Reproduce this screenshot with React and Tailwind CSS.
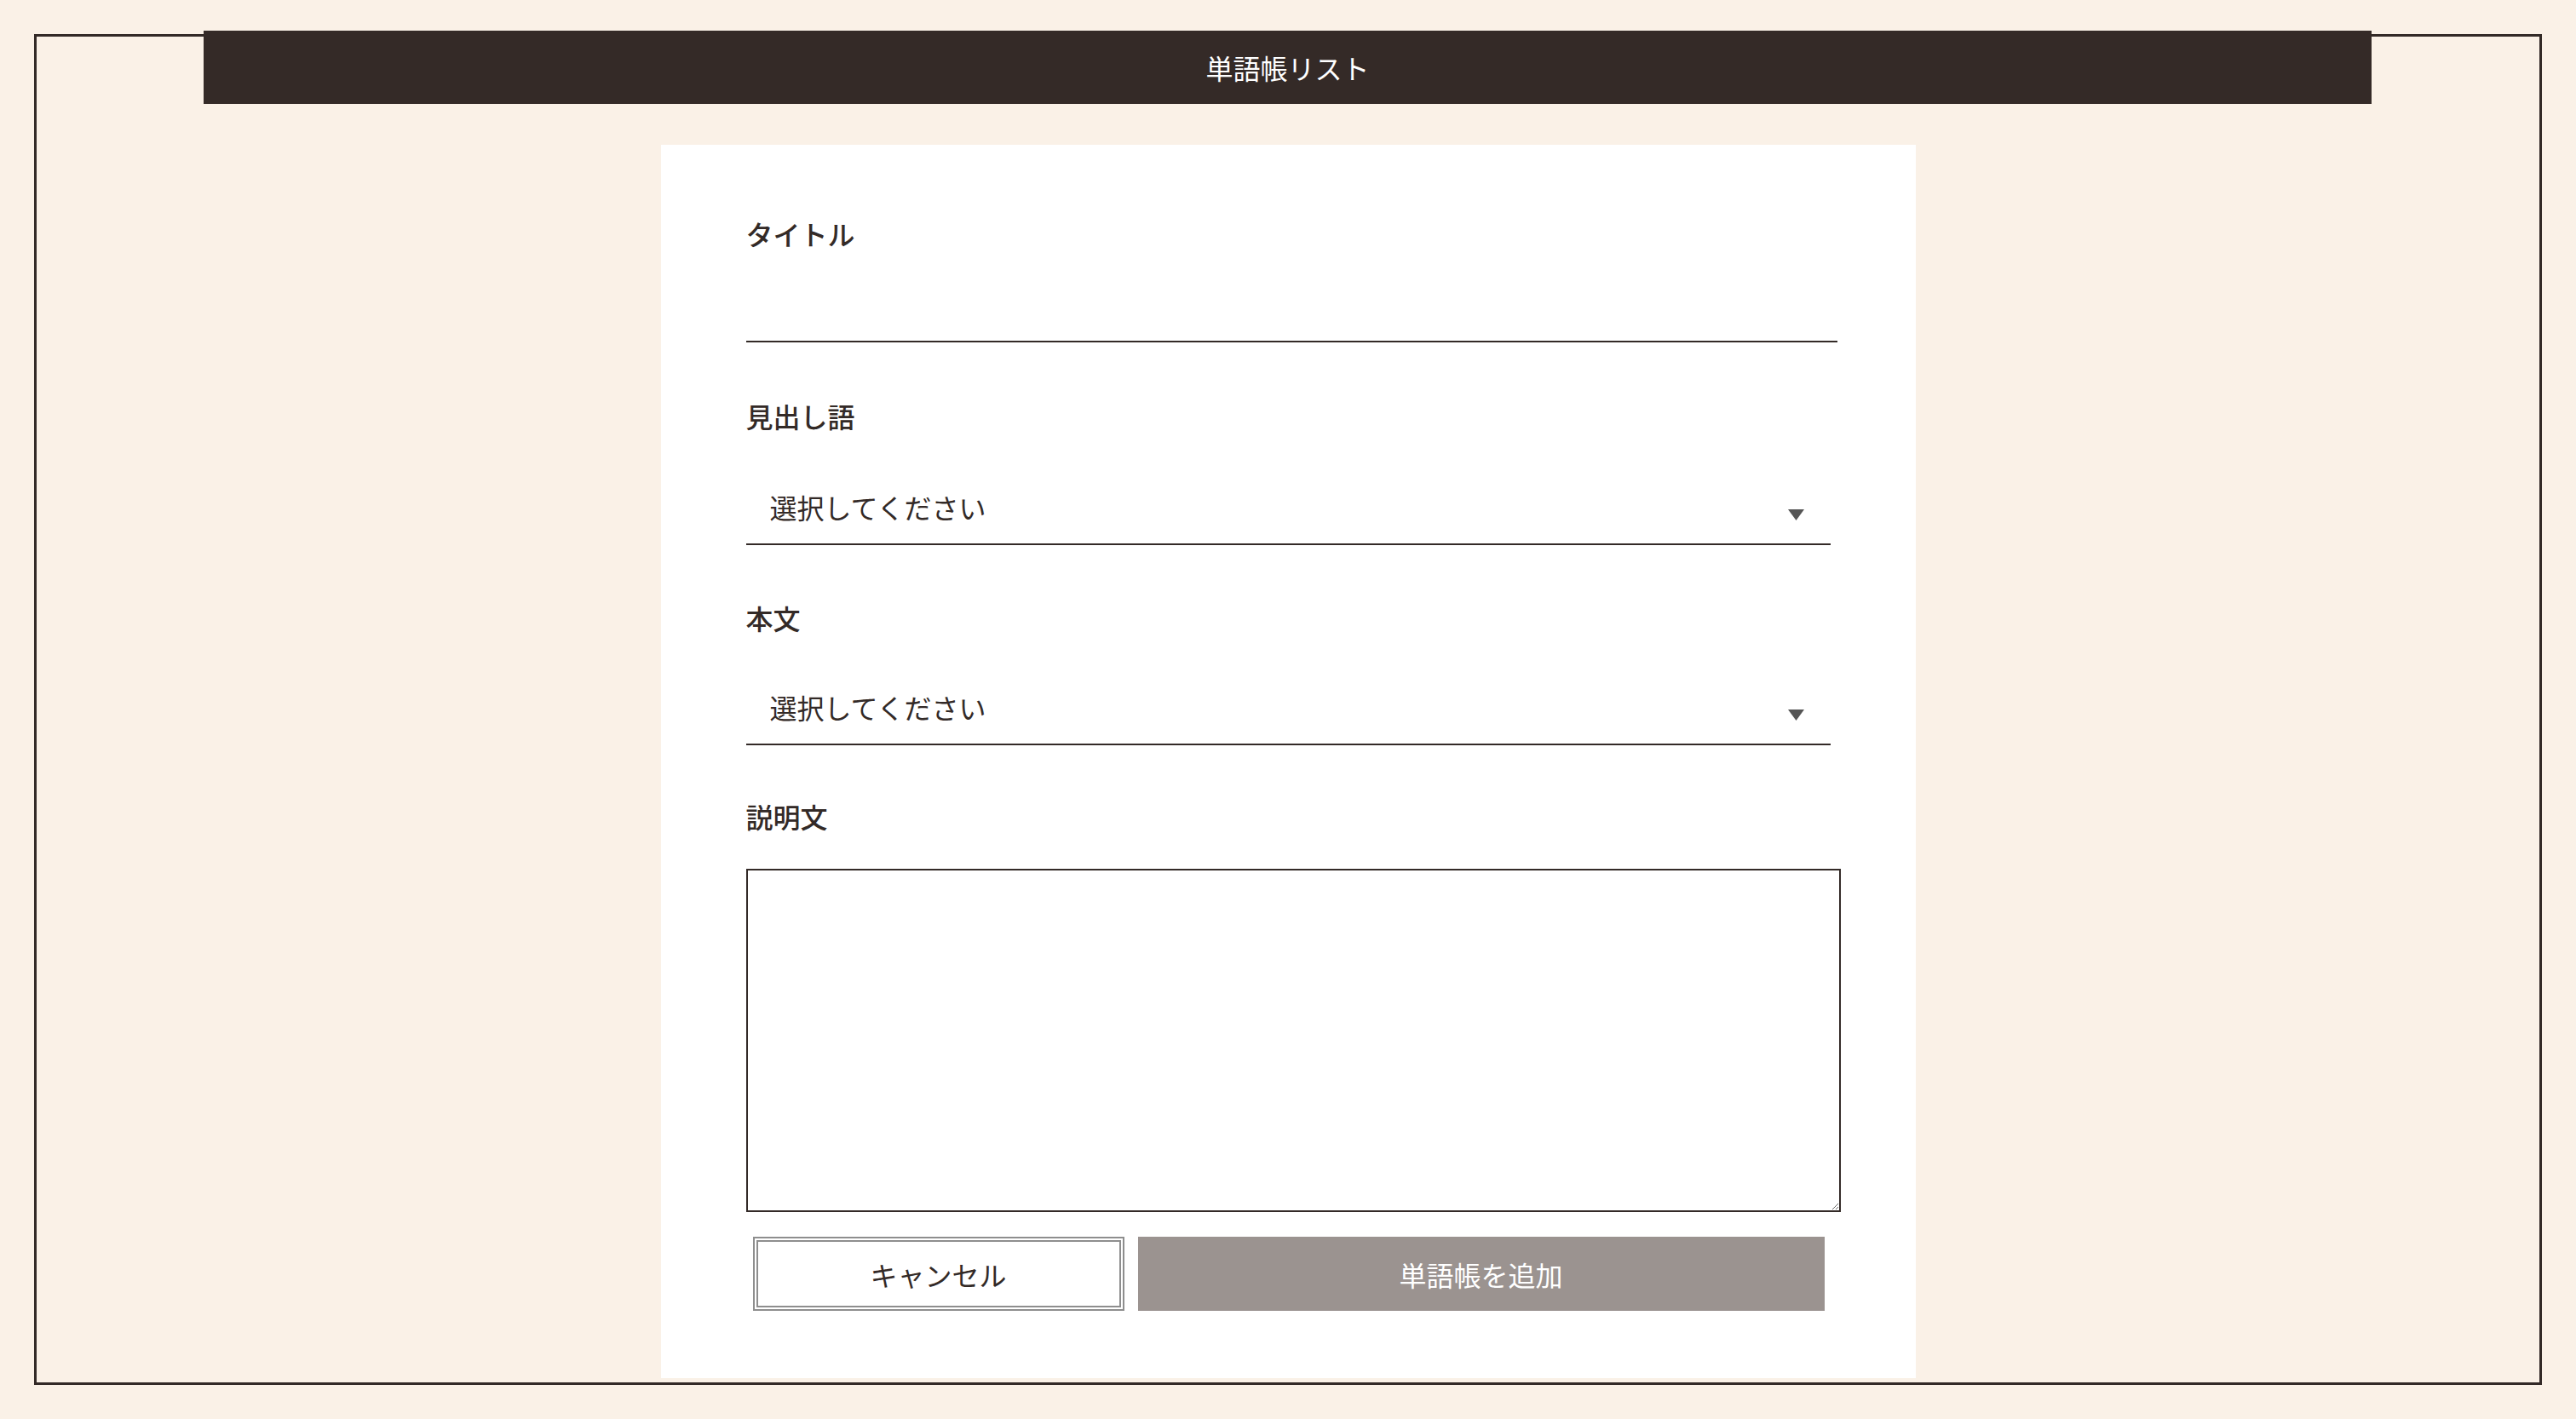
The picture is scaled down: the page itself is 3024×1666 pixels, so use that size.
import { useState } from "react";

const font = { fontFamily: '"Noto Sans CJK JP", "Noto Sans", sans-serif' };

function Label({ children, className = "" }) {
    return (
        <label className={`block h-[48px] text-[32px] leading-[48px] font-medium text-[#332a27] ${className}`}>
            {children}
        </label>
    );
}

function SelectField({ value, onChange, className = "" }) {
    return (
        <div className={`relative w-full ${className}`}>
            <select
                value={value}
                onChange={onChange}
                className="h-[88px] w-full appearance-none rounded-none border-0 border-b-2 border-[#332a27] bg-transparent pl-[28px] text-[32px] text-[#332a27] outline-none"
                style={font}
            >
                <option value="">選択してください</option>
                <option value="a">A</option>
                <option value="b">B</option>
            </select>
            <svg
                className="pointer-events-none absolute right-[31px] top-[46px]"
                width="19"
                height="13"
                viewBox="0 0 19 13"
            >
                <path d="M0 0 H19 L9.5 13 Z" fill="#555" />
            </svg>
        </div>
    );
}

export default function App() {
    const [form, setForm] = useState({ title: "", head: "", body: "", note: "" });

    const set = (key) => (e) => setForm({ ...form, [key]: e.target.value });

    return (
        <div className="relative min-h-screen bg-[#faf1e7] p-[40px]" style={font}>
            {/* header bar sits over the frame */}
            <header className="absolute left-[239px] top-[36px] z-10 flex h-[86px] w-[2545px] items-center justify-center bg-[#342a27]">
                <h1 className="text-[32px] leading-none text-white">単語帳リスト</h1>
            </header>

            <div className="h-[1586px] border-[3px] border-[#332a27] pt-[127px]">
                <section className="mx-auto w-[1473px] bg-white px-[100px] pt-[80px] pb-[79px]">
                    <form onSubmit={(e) => e.preventDefault()}>
                        <Label>タイトル</Label>
                        <input
                            type="text"
                            value={form.title}
                            onChange={set("title")}
                            className="block h-[104px] w-[1281px] border-0 border-b-2 border-[#332a27] bg-transparent px-[28px] text-[32px] text-[#332a27] outline-none"
                            style={font}
                        />

                        <Label className="mt-[62px]">見出し語</Label>
                        <SelectField value={form.head} onChange={set("head")} className="mt-[40px]" />

                        <Label className="mt-[61px]">本文</Label>
                        <SelectField value={form.body} onChange={set("body")} className="mt-[38px]" />

                        <Label className="mt-[59px]">説明文</Label>
                        <textarea
                            value={form.note}
                            onChange={set("note")}
                            className="mt-[38px] block h-[403px] w-[1285px] border-2 border-[#332a27] bg-white p-[16px] text-[32px] text-[#332a27] outline-none"
                            style={font}
                        />

                        <div className="mt-[29px] flex gap-[16px] pl-[8px]">
                            <button
                                type="button"
                                className="h-[87px] w-[436px] border-[6px] border-double border-[#8e8e8e] bg-white text-[32px] text-[#332a27]"
                            >
                                キャンセル
                            </button>
                            <button
                                type="submit"
                                className="h-[87px] w-[806px] bg-[#9b9390] text-[32px] text-white"
                            >
                                単語帳を追加
                            </button>
                        </div>
                    </form>
                </section>
            </div>
        </div>
    );
}
